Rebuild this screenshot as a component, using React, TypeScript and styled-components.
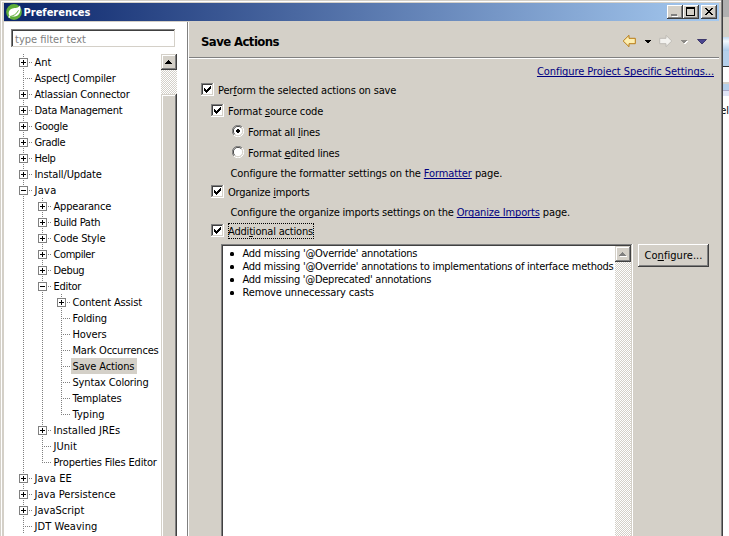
import React from "react";
import styled, { createGlobalStyle, css } from "styled-components";

const FACE = "#d4d0c8";
const SHADOW = "#808080";
const DARK = "#404040";

const GlobalStyle = createGlobalStyle`
  * { box-sizing: border-box; }
  body {
    margin: 0;
    background: #fff;
    color: #000;
    font: 11px/16px "DejaVu Sans Condensed", "DejaVu Sans", sans-serif;
  }
`;

const raised = css`
  background: ${FACE};
  box-shadow: inset -1px -1px ${DARK}, inset 1px 1px ${FACE}, inset -2px -2px ${SHADOW}, inset 2px 2px #fff;
`;

const raisedBright = css`
  background: ${FACE};
  box-shadow: inset -1px -1px ${DARK}, inset 1px 1px #fff, inset -2px -2px ${SHADOW};
`;

const sunken = css`
  background: #fff;
  box-shadow: inset -1px -1px #fff, inset 1px 1px ${SHADOW}, inset -2px -2px ${FACE}, inset 2px 2px ${DARK};
`;

const Desktop = styled.div`
  display: flex;
  width: 729px;
  height: 536px;
  overflow: hidden;
`;

const Dialog = styled.div`
  display: flex;
  flex-direction: column;
  width: 723px;
  height: 540px;
  padding: 3px 4px 0 4px;
  background: ${FACE};
  box-shadow: inset -1px 0 ${DARK}, inset -2px 0 ${SHADOW}, inset 1px 1px ${FACE}, inset 2px 2px #fff;
`;

const TitleBar = styled.header`
  display: flex;
  align-items: center;
  height: 18px;
  flex: none;
  padding: 0 2px 0 2px;
  background: linear-gradient(to right, #0a246a, #a6caf0);
`;

const TitleText = styled.h1`
  flex: 1;
  margin: 0 0 0 1.5px;
  font-size: 11px;
  line-height: 19px;
  font-weight: bold;
  color: #fff;
`;

const CaptionButton = styled.button<{ $gap?: number }>`
  ${raisedBright}
  width: 16px;
  height: 14px;
  margin: 0 0 0 ${(p) => p.$gap ?? 0}px;
  padding: 0;
  border: 0;
  svg { display: block; }
`;

const Body = styled.div`
  display: flex;
  flex: 1;
  min-height: 0;
  margin-top: 1px;
`;

const Sidebar = styled.nav`
  display: flex;
  flex-direction: column;
  width: 185px;
  padding: 7px 10px 0 7px;
  background: #fff;
  border-right: 1px solid #fff;
  box-shadow: inset -1px 0 ${SHADOW};
`;

const FilterBox = styled.div`
  ${sunken}
  width: 165px;
  height: 19px;
  padding: 0 4px;
  line-height: 21px;
  color: ${SHADOW};
  flex: none;
`;

const TreeArea = styled.div`
  display: flex;
  width: 166px;
  flex: 1;
  min-height: 0;
  margin-top: 6px;
`;

const TreeList = styled.ul`
  flex: 1;
  min-width: 0;
  margin: 0;
  padding: 0 0 0 3px;
  list-style: none;
`;

const TreeRow = styled.li`
  display: flex;
  height: 16px;
  white-space: nowrap;
`;

const Cell = styled.svg`
  display: block;
  width: 19px;
  height: 16px;
  flex: none;
`;

const TreeLabel = styled.span<{ $selected?: boolean; $ls: number }>`
  height: 16px;
  padding: 0 3px 0 1.5px;
  line-height: 18px;
  letter-spacing: ${(p) => p.$ls - 0.04}px;
  background: ${(p) => (p.$selected ? FACE : "transparent")};
`;

const ScrollTrack = styled.div`
  display: flex;
  flex-direction: column;
  width: 16px;
  flex: none;
  background: conic-gradient(#fff 25%, ${FACE} 0 50%, #fff 0 75%, ${FACE} 0) 0 0 / 2px 2px;
`;

const ScrollArrow = styled.div`
  ${raised}
  height: 16px;
  svg { display: block; }
`;

const ScrollThumb = styled.div`
  ${raised}
  flex: 1;
  margin-top: 24px;
`;

const Content = styled.main`
  display: flex;
  flex-direction: column;
  flex: 1;
  min-width: 0;
`;

const PageHeader = styled.div`
  display: flex;
  align-items: center;
  height: 37px;
  flex: none;
  padding: 1px 8px 0 12px;
  border-bottom: 1px solid #fff;
  box-shadow: inset 0 -1px ${SHADOW};
`;

const PageTitle = styled.h2`
  flex: 1;
  margin: 0;
  padding-top: 2px;
  font-size: 13px;
  letter-spacing: -0.58px;
`;

const NavIcons = styled.svg`
  display: block;
  width: 90px;
  height: 16px;
`;

const LinkRow = styled.div`
  height: 23px;
  flex: none;
  padding: 5px 5px 0 0;
  text-align: right;
`;

const Link = styled.a<{ $ls: number }>`
  color: #000080;
  letter-spacing: ${(p) => p.$ls}px;
  text-decoration: underline;
  text-decoration-skip-ink: none;
  text-decoration-thickness: 1px;
  text-underline-offset: 1px;
`;

const FormRow = styled.div<{ $indent: number; $height: number }>`
  display: flex;
  align-items: flex-start;
  flex: none;
  height: ${(p) => p.$height}px;
  padding-left: ${(p) => p.$indent}px;
  line-height: 18px;
  white-space: pre;
`;

const Text = styled.span<{ $ls: number }>`
  letter-spacing: ${(p) => p.$ls}px;
  u {
    text-decoration-skip-ink: none;
    text-decoration-thickness: 1px;
    text-underline-offset: 1px;
  }
`;

const CheckSquare = styled.span`
  ${sunken}
  width: 13px;
  height: 13px;
  margin: 1px 4px 0 0;
  flex: none;
  svg { display: block; }
`;

const RadioMark = styled.svg`
  display: block;
  width: 12px;
  height: 12px;
  margin: 1px 4px 0 0;
`;

const FocusFrame = styled.span`
  height: 16px;
  padding-right: 1px;
  outline: 1px dotted #000;
  outline-offset: -1px;
`;

const ListSection = styled.div`
  display: flex;
  flex: none;
  align-items: flex-start;
  gap: 5px;
  padding-left: 32px;
`;

const ListBox = styled.div`
  ${sunken}
  display: flex;
  width: 412px;
  height: 330px;
  padding: 2px;
`;

const ActionList = styled.ul`
  flex: 1;
  min-width: 0;
  margin: 0;
  padding: 1px 0 0 7px;
  list-style: none;
  line-height: 13px;
  white-space: nowrap;
`;

const ActionItem = styled.li`
  display: flex;
  align-items: center;
  height: 13px;
  &::before {
    content: "";
    width: 4px;
    height: 4px;
    margin: 1px 8.5px 0 0;
    border-radius: 1.5px;
    background: #000;
    flex: none;
  }
`;

const PushButton = styled.button`
  ${raisedBright}
  width: 71px;
  height: 23px;
  padding: 1px 0 0;
  border: 0;
  color: #000;
  font: inherit;
`;

const BackWindow = styled.aside`
  display: flex;
  flex-direction: column;
  width: 6px;
  overflow: hidden;
`;

const Band = styled.div<{ $height: number; $fill: string }>`
  height: ${(p) => p.$height}px;
  flex: none;
  background: ${(p) => p.$fill};
`;

const CutText = styled.div`
  display: flex;
  justify-content: flex-end;
  height: 440px;
  padding-top: 7px;
  flex: none;
  background: #fff;
`;

type Kind = "line" | "blank" | "plus" | "minus" | "leaf" | "last";

function TreeCell({ kind }: { kind: Kind }) {
  const dots: [number, number][] = [];
  if (kind !== "blank") {
    for (let y = 0; y < 16; y += 2) if (kind !== "last" || y <= 8) dots.push([9, y]);
  }
  if (kind !== "blank" && kind !== "line") for (let x = 11; x < 19; x += 2) dots.push([x, 8]);
  const box = kind === "plus" || kind === "minus";
  return (
    <Cell viewBox="0 0 19 16" shapeRendering="crispEdges">
      {dots.map(([x, y]) => (
        <rect key={`${x}-${y}`} x={x} y={y} width="1" height="1" fill={SHADOW} />
      ))}
      {box && <rect x="5.5" y="4.5" width="8" height="8" fill="#fff" stroke={SHADOW} />}
      {box && <rect x="7" y="8" width="5" height="1" />}
      {kind === "plus" && <rect x="9" y="6" width="1" height="5" />}
    </Cell>
  );
}

const nodes: { cells: Kind[]; label: string; ls: number; selected?: boolean }[] = [
  { cells: ["plus"], label: "Ant", ls: 0 },
  { cells: ["leaf"], label: "AspectJ Compiler", ls: -0.16 },
  { cells: ["plus"], label: "Atlassian Connector", ls: -0.16 },
  { cells: ["plus"], label: "Data Management", ls: -0.24 },
  { cells: ["plus"], label: "Google", ls: -0.24 },
  { cells: ["plus"], label: "Gradle", ls: -0.34 },
  { cells: ["plus"], label: "Help", ls: -0.4 },
  { cells: ["plus"], label: "Install/Update", ls: -0.08 },
  { cells: ["minus"], label: "Java", ls: 0.35 },
  { cells: ["line", "plus"], label: "Appearance", ls: -0.14 },
  { cells: ["line", "plus"], label: "Build Path", ls: -0.26 },
  { cells: ["line", "plus"], label: "Code Style", ls: -0.11 },
  { cells: ["line", "plus"], label: "Compiler", ls: -0.38 },
  { cells: ["line", "plus"], label: "Debug", ls: -0.31 },
  { cells: ["line", "minus"], label: "Editor", ls: -0.24 },
  { cells: ["line", "line", "plus"], label: "Content Assist", ls: -0.1 },
  { cells: ["line", "line", "leaf"], label: "Folding", ls: -0.16 },
  { cells: ["line", "line", "leaf"], label: "Hovers", ls: -0.06 },
  { cells: ["line", "line", "leaf"], label: "Mark Occurrences", ls: -0.16 },
  { cells: ["line", "line", "leaf"], label: "Save Actions", ls: -0.1, selected: true },
  { cells: ["line", "line", "leaf"], label: "Syntax Coloring", ls: -0.12 },
  { cells: ["line", "line", "leaf"], label: "Templates", ls: -0.08 },
  { cells: ["line", "line", "last"], label: "Typing", ls: 0.1 },
  { cells: ["line", "plus"], label: "Installed JREs", ls: 0.06 },
  { cells: ["line", "leaf"], label: "JUnit", ls: 0.1 },
  { cells: ["line", "last"], label: "Properties Files Editor", ls: -0.13 },
  { cells: ["plus"], label: "Java EE", ls: 0.17 },
  { cells: ["plus"], label: "Java Persistence", ls: 0.08 },
  { cells: ["plus"], label: "JavaScript", ls: 0.06 },
  { cells: ["leaf"], label: "JDT Weaving", ls: 0.1 },
];

const actions = [
  { label: "Add missing '@Override' annotations", ls: -0.25 },
  { label: "Add missing '@Override' annotations to implementations of interface methods", ls: -0.25 },
  { label: "Add missing '@Deprecated' annotations", ls: -0.26 },
  { label: "Remove unnecessary casts", ls: -0.15 },
];

function Check() {
  return (
    <CheckSquare>
      <svg width="13" height="13" viewBox="0 0 13 13" shapeRendering="crispEdges">
        <path d="M3 5h1v1h1v1h1v-1h1v-1h1v-1h1v-1h1v3h-1v1h-1v1h-1v1h-1v1h-1v-1h-1v-1h-1z" />
      </svg>
    </CheckSquare>
  );
}

function Radio({ on }: { on?: boolean }) {
  return (
    <RadioMark viewBox="0 0 12 12" fill="none">
      <circle cx="6" cy="6" r="5" fill="#fff" />
      <path d="M1.9 10.1A5.5 5.5 0 0 1 10.1 1.9" stroke={SHADOW} />
      <path d="M10.1 1.9A5.5 5.5 0 0 1 1.9 10.1" stroke="#fff" />
      <path d="M2.7 9.3A4.6 4.6 0 0 1 9.3 2.7" stroke={DARK} />
      <path d="M9.3 2.7A4.6 4.6 0 0 1 2.7 9.3" stroke={FACE} />
      {on && <path d="M5 4h2v1h1v2h-1v1h-2v-1h-1v-2h1z" fill="#000" shapeRendering="crispEdges" />}
    </RadioMark>
  );
}

function Up({ muted }: { muted?: boolean }) {
  return (
    <ScrollArrow>
      <svg width="16" height="16" viewBox="0 0 16 16" shapeRendering="crispEdges">
        {muted && <path d="M8 7h1v1h1v1h1v1h1v1H5v-1h7z" fill="#fff" />}
        <path d="M7 6h1v1h1v1h1v1h1v1H4V9h1V8h1V7h1z" fill={muted ? SHADOW : "#000"} />
      </svg>
    </ScrollArrow>
  );
}

export default function App() {
  return (
    <>
      <GlobalStyle />
      <Desktop>
        <Dialog>
          <TitleBar>
            <svg width="16" height="18" viewBox="0 0 16 18">
              <circle cx="8" cy="9" r="7.9" fill="#5fae3a" />
              <path d="M14 2.6c1.4 5.5-.2 10.2-5.1 10.9-2.2.3-3.8-.3-5.3-.2C1.9 10.5 2.5 6.6 6.5 5.6c3-.8 5.7-.4 7.5-3z" fill="#fff" />
              <path d="M3.5 13.7c3.5-.7 7.3-2.4 9-6.4" stroke="#5fae3a" strokeWidth="1" fill="none" />
              <circle cx="3.4" cy="13.9" r=".9" fill="#fff" />
            </svg>
            <TitleText>Preferences</TitleText>
            <CaptionButton>
              <svg width="16" height="14" shapeRendering="crispEdges">
                <path d="M5 11h6v1H5z" fill="#fff" />
                <path d="M4 9h6v2H4z" fill={SHADOW} />
              </svg>
            </CaptionButton>
            <CaptionButton>
              <svg width="16" height="14" shapeRendering="crispEdges">
                <path d="M3.5 2.5h8v8h-8zM3 3.5h9" fill="none" stroke="#000" />
              </svg>
            </CaptionButton>
            <CaptionButton $gap={2}>
              <svg width="16" height="14" shapeRendering="crispEdges">
                <path d="M4 3h2v1h1v1h2V4h1V3h2v1h-1v1h-1v1H9v1h1v1h1v1h1v1h-2V9H9V8H7v1H6v1H4V9h1V8h1V7h1V6H6V5H5V4H4z" />
              </svg>
            </CaptionButton>
          </TitleBar>
          <Body>
            <Sidebar>
              <FilterBox>type filter text</FilterBox>
              <TreeArea>
                <TreeList>
                  {nodes.map((n) => (
                    <TreeRow key={n.label}>
                      {n.cells.map((kind, i) => (
                        <TreeCell key={i} kind={kind} />
                      ))}
                      <TreeLabel $selected={n.selected} $ls={n.ls}>{n.label}</TreeLabel>
                    </TreeRow>
                  ))}
                </TreeList>
                <ScrollTrack>
                  <Up />
                  <ScrollThumb />
                </ScrollTrack>
              </TreeArea>
            </Sidebar>
            <Content>
              <PageHeader>
                <PageTitle>Save Actions</PageTitle>
                <NavIcons viewBox="0 0 90 16">
                  <path d="M2.2 8 8 2.3v3h6.3v5.4H8v3z" fill="#fdeeb0" stroke="#b87b14" strokeLinejoin="round" />
                  <path d="M24 7h6v1h-1v1h-1v1h-2V9h-1V8h-1z" shapeRendering="crispEdges" />
                  <path d="M50.8 8 45 2.3v3h-6.3v5.4H45v3z" fill="#f3f2ef" stroke="#bdbab4" strokeLinejoin="round" />
                  <path d="M61 8h6v1h-1v1h-1v1h-2v-1h1V9h1z" fill="#fff" shapeRendering="crispEdges" />
                  <path d="M60 7h6v1h-1v1h-1v1h-2V9h-1V8h-1z" fill="#8c8a86" shapeRendering="crispEdges" />
                  <path d="M76.500 6.500h9L81 11z" fill="#4a4590" stroke="#29245c" strokeWidth=".8" />
                </NavIcons>
              </PageHeader>
              <LinkRow>
                <Link $ls={-0.07}>Configure Project Specific Settings...</Link>
              </LinkRow>
              <FormRow $indent={12} $height={21}>
                <Check />
                <Text $ls={-0.15}>Per<u>f</u>orm the selected actions on save</Text>
              </FormRow>
              <FormRow $indent={22} $height={21}>
                <Check />
                <Text $ls={-0.15}>Format <u>s</u>ource code</Text>
              </FormRow>
              <FormRow $indent={43} $height={21}>
                <Radio on />
                <Text $ls={-0.24}>Format all <u>l</u>ines</Text>
              </FormRow>
              <FormRow $indent={43} $height={20}>
                <Radio />
                <Text $ls={-0.22}>Format <u>e</u>dited lines</Text>
              </FormRow>
              <FormRow $indent={41.5} $height={19}>
                <Text $ls={-0.12}>Configure the formatter settings on the </Text>
                <Link $ls={-0.09}>Formatter</Link>
                <Text $ls={-0.1}> page.</Text>
              </FormRow>
              <FormRow $indent={22} $height={20}>
                <Check />
                <Text $ls={-0.24}>Organize <u>i</u>mports</Text>
              </FormRow>
              <FormRow $indent={41.5} $height={19}>
                <Text $ls={-0.18}>Configure the organize imports settings on the </Text>
                <Link $ls={-0.15}>Organize Imports</Link>
                <Text $ls={-0.1}> page.</Text>
              </FormRow>
              <FormRow $indent={22} $height={21}>
                <Check />
                <FocusFrame>
                  <Text $ls={-0.19}>Addi<u>t</u>ional actions</Text>
                </FocusFrame>
              </FormRow>
              <ListSection>
                <ListBox>
                  <ActionList>
                    {actions.map((a) => (
                      <ActionItem key={a.label}>
                        <Text $ls={a.ls}>{a.label}</Text>
                      </ActionItem>
                    ))}
                  </ActionList>
                  <ScrollTrack>
                    <Up muted />
                  </ScrollTrack>
                </ListBox>
                <PushButton>
                  <Text $ls={0.05}>Co<u>n</u>figure...</Text>
                </PushButton>
              </ListSection>
            </Content>
          </Body>
        </Dialog>
        <BackWindow>
          <Band $height={17} $fill="#b0b0b0" />
          <Band $height={20} $fill={FACE} />
          <Band $height={14} $fill="linear-gradient(#c0d8f0, #f4f9fe 30%, #a9c8e8)" />
          <Band $height={15} $fill="#b5cfea" />
          <Band $height={1} $fill="#303030" />
          <Band $height={15} $fill="#fff" />
          <Band $height={2} $fill={FACE} />
          <Band $height={6} $fill="#b5cfea" />
          <Band $height={1} $fill="#a8a8c8" />
          <Band $height={5} $fill="#e0e4f6" />
          <CutText>el</CutText>
        </BackWindow>
      </Desktop>
    </>
  );
}
